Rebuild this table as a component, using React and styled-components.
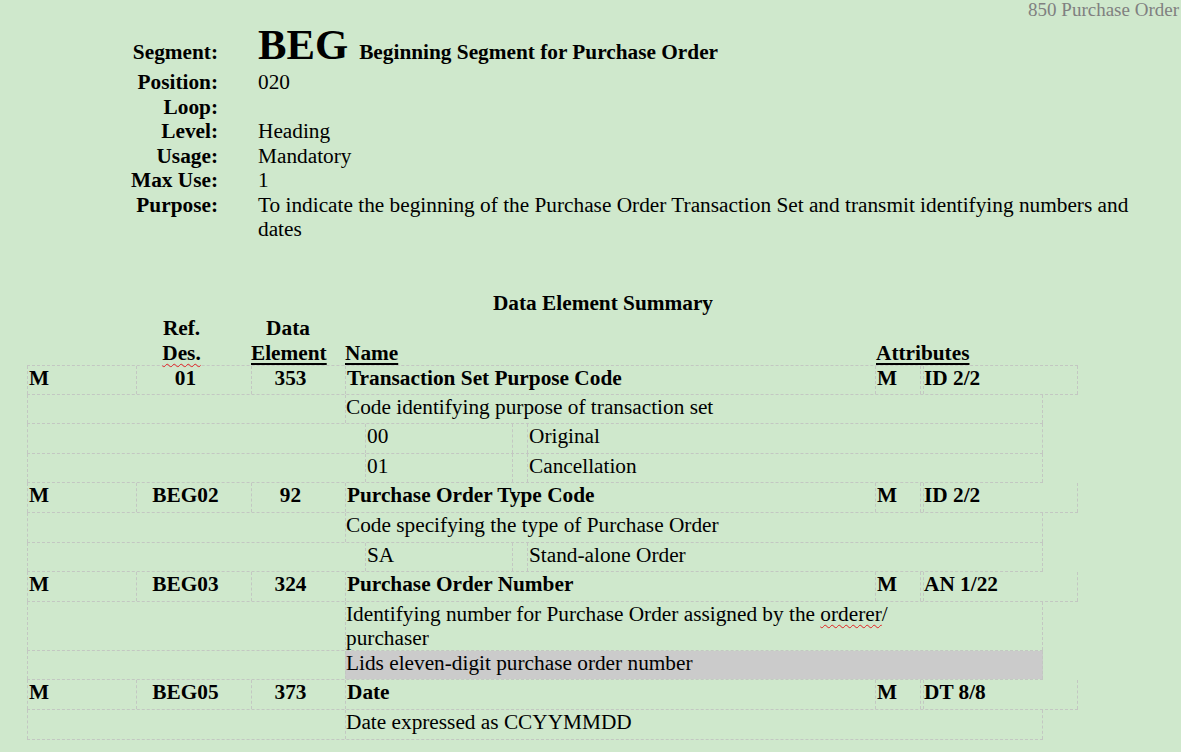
import React from 'react'
import styled, { createGlobalStyle } from 'styled-components'

const GlobalStyle = createGlobalStyle`
  html, body {
    margin: 0;
    padding: 0;
    background: #cfe8cc;
  }
  body {
    font-family: "Liberation Serif", "Times New Roman", serif;
    color: #000;
  }
`

const Page = styled.div`
  width: 1181px;
  min-height: 752px;
  background: #cfe8cc;
`

const TopNote = styled.div`
  text-align: right;
  padding-right: 2px;
  color: #808080;
  font-size: 19px;
  line-height: 20px;
`

const Info = styled.div`
  display: grid;
  grid-template-columns: 218px 890px;
  column-gap: 40px;
  align-items: baseline;
  font-size: 21.3px;
  line-height: 24.5px;
`

const Label = styled.div`
  text-align: right;
  font-weight: bold;
`

const Value = styled.div``

const SegId = styled.span`
  font-size: 42.7px;
  line-height: 50px;
  font-weight: bold;
  margin-right: 11px;
`

const SegName = styled.span`
  font-weight: bold;
`

const Title = styled.div`
  margin-top: 49px;
  padding-left: 25px;
  text-align: center;
  font-weight: bold;
  font-size: 21.3px;
  line-height: 24.5px;
`

const Table = styled.div`
  margin-left: 27px;
  margin-top: 1px;
  font-size: 21.3px;
`

const HeadRow = styled.div`
  display: flex;
  align-items: flex-end;
  font-weight: bold;
  line-height: 24.5px;
`

const HeadCell = styled.div`
  box-sizing: border-box;
  width: ${p => p.$w}px;
  padding-right: ${p => p.$pr || 0}px;
  padding-left: ${p => p.$pl || 0}px;
  text-align: ${p => p.$align || 'left'};
`

const Under = styled.span`
  text-decoration: underline;
  text-decoration-thickness: 2px;
  text-underline-offset: 3px;
`

const Squiggle = styled.span`
  text-decoration: underline wavy #e02020;
  text-decoration-thickness: 1px;
  text-underline-offset: 3px;
`

const Row = styled.div`
  display: flex;
  box-sizing: border-box;
  height: ${p => (p.$auto ? 'auto' : '29.6px')};
  border-bottom: 1px dashed #c3c7c2;
  border-top: ${p => (p.$first ? '1px dashed #c3c7c2' : 'none')};
  width: max-content;
`

const Cell = styled.div`
  box-sizing: border-box;
  width: ${p => p.$w}px;
  flex: none;
  line-height: 24px;
  padding-left: ${p => p.$pl || 0}px;
  padding-right: ${p => p.$pr || 0}px;
  text-align: ${p => p.$align || 'left'};
  font-weight: ${p => (p.$bold ? 'bold' : 'normal')};
  background: ${p => p.$bg || 'transparent'};
  border-left: ${p => (p.$bl ? '1px dashed #c3c7c2' : 'none')};
  border-right: ${p => (p.$br ? '1px dashed #c3c7c2' : 'none')};
`

const Gap = styled.div`
  box-sizing: border-box;
  width: ${p => p.$w}px;
  flex: none;
  border-left: ${p => (p.$bl ? '1px dashed #c3c7c2' : 'none')};
`

const info = [
  ['Position:', '020'],
  ['Loop:', ''],
  ['Level:', 'Heading'],
  ['Usage:', 'Mandatory'],
  ['Max Use:', '1'],
  ['Purpose:', 'To indicate the beginning of the Purchase Order Transaction Set and transmit identifying numbers and dates'],
]

const elements = [
  {
    ref: '01', de: '353', name: 'Transaction Set Purpose Code', attr: 'ID 2/2',
    desc: 'Code identifying purpose of transaction set',
    codes: [['00', 'Original'], ['01', 'Cancellation']],
  },
  {
    ref: 'BEG02', de: '92', name: 'Purchase Order Type Code', attr: 'ID 2/2',
    desc: 'Code specifying the type of Purchase Order',
    codes: [['SA', 'Stand-alone Order']],
  },
  {
    ref: 'BEG03', de: '324', name: 'Purchase Order Number', attr: 'AN 1/22',
    desc: (
      <>Identifying number for Purchase Order assigned by the <Squiggle>orderer</Squiggle>/ purchaser</>
    ),
    wide: true,
    note: 'Lids eleven-digit purchase order number',
  },
  {
    ref: 'BEG05', de: '373', name: 'Date', attr: 'DT 8/8',
    desc: 'Date expressed as CCYYMMDD',
  },
]

function Element({ el, first }) {
  return (
    <>
      <Row $first={first}>
        <Cell $w={109} $bl $bold $pl={1}>M</Cell>
        <Cell $w={115} $bl $bold $align="center" $pr={17}>{el.ref}</Cell>
        <Cell $w={94} $bl $bold $align="center" $pr={16}>{el.de}</Cell>
        <Cell $w={530} $bl $bold $pl={1}>{el.name}</Cell>
        <Cell $w={46} $bl $br $bold $pl={1}>M</Cell>
        <Gap $w={2} />
        <Cell $w={155} $bl $br $bold>{el.attr}</Cell>
      </Row>
      <Row $auto={el.wide}>
        <Cell $w={318} $bl />
        <Cell $w={698} $bl $br $pr={el.wide ? 130 : 0}>{el.desc}</Cell>
      </Row>
      {el.note && (
        <Row>
          <Cell $w={318} $bl />
          <Cell $w={698} $bl $br $bg="#cbcbcb">{el.note}</Cell>
        </Row>
      )}
      {(el.codes || []).map(([code, meaning]) => (
        <Row key={code}>
          <Cell $w={338} $bl />
          <Cell $w={147} $bl $pl={1}>{code}</Cell>
          <Gap $w={15} $bl />
          <Cell $w={516} $bl $br $pl={1}>{meaning}</Cell>
        </Row>
      ))}
    </>
  )
}

export default function App() {
  return (
    <Page>
      <GlobalStyle />
      <TopNote>850 Purchase Order</TopNote>
      <Info>
        <Label>Segment:</Label>
        <Value>
          <SegId>BEG</SegId>
          <SegName>Beginning Segment for Purchase Order</SegName>
        </Value>
        {info.map(([label, value]) => (
          <React.Fragment key={label}>
            <Label>{label}</Label>
            <Value>{value || '\u00a0'}</Value>
          </React.Fragment>
        ))}
      </Info>
      <Title>Data Element Summary</Title>
      <Table>
        <HeadRow>
          <HeadCell $w={109} />
          <HeadCell $w={115} $pr={24} $align="center">
            Ref.<br /><Squiggle>Des.</Squiggle>
          </HeadCell>
          <HeadCell $w={94} $pr={20} $align="center">
            Data<br /><Under>Element</Under>
          </HeadCell>
          <HeadCell $w={530}><Under>Name</Under></HeadCell>
          <HeadCell $w={200} $pl={1}><Under>Attributes</Under></HeadCell>
        </HeadRow>
        {elements.map((el, i) => (
          <Element key={el.ref} el={el} first={i === 0} />
        ))}
      </Table>
    </Page>
  )
}
